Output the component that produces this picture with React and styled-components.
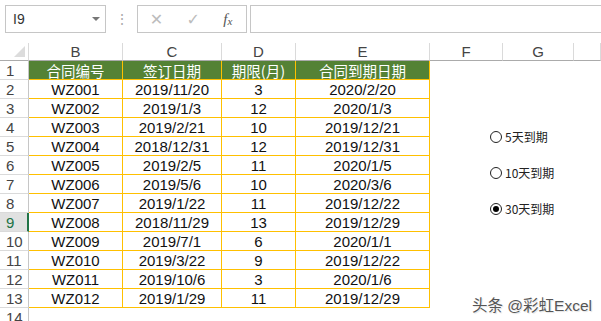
import styled, { createGlobalStyle } from 'styled-components';

const GlobalStyle = createGlobalStyle`
  body {
    margin: 0;
    background: #fff;
    overflow: hidden;
    font-family: 'Liberation Sans', 'Noto Sans CJK SC', sans-serif;
  }
`;

const rows = [
  ['WZ001', '2019/11/20', '3', '2020/2/20'],
  ['WZ002', '2019/1/3', '12', '2020/1/3'],
  ['WZ003', '2019/2/21', '10', '2019/12/21'],
  ['WZ004', '2018/12/31', '12', '2019/12/31'],
  ['WZ005', '2019/2/5', '11', '2020/1/5'],
  ['WZ006', '2019/5/6', '10', '2020/3/6'],
  ['WZ007', '2019/1/22', '11', '2019/12/22'],
  ['WZ008', '2018/11/29', '13', '2019/12/29'],
  ['WZ009', '2019/7/1', '6', '2020/1/1'],
  ['WZ010', '2019/3/22', '9', '2019/12/22'],
  ['WZ011', '2019/10/6', '3', '2020/1/6'],
  ['WZ012', '2019/1/29', '11', '2019/12/29'],
];

const headers = ['合同编号', '签订日期', '期限(月)', '合同到期日期'];
const letters = ['B', 'C', 'D', 'E', 'F', 'G', ''];
const options = ['5天到期', '10天到期', '30天到期'];

const App = () => (
  <Page>
    <GlobalStyle />
    <FormulaBar>
      <NameBox>
        I9
        <Caret />
      </NameBox>
      <Dots>⋮</Dots>
      <FuncBox>
        <FuncIcon>✕</FuncIcon>
        <FuncIcon>✓</FuncIcon>
        <Fx>
          f<sub>x</sub>
        </Fx>
      </FuncBox>
      <FormulaInput />
    </FormulaBar>

    <Sheet>
      <Corner />
      {letters.map((l, i) => (
        <ColHead key={i}>{l}</ColHead>
      ))}

      <RowHead>1</RowHead>
      {headers.map((h) => (
        <TitleCell key={h}>{h}</TitleCell>
      ))}
      <Blank />
      <Blank />
      <Blank />

      {rows.map((r, i) => (
        <Row key={r[0]} r={r} n={i + 2} />
      ))}

      <RowHead>14</RowHead>
      <Blank />
      <Blank />
      <Blank />
      <Blank />
      <Blank />
      <Blank />
      <Blank />
    </Sheet>

    <Radios>
      {options.map((o, i) => (
        <Radio key={o}>
          <Dot $checked={i === 2} />
          {o}
        </Radio>
      ))}
    </Radios>

    <Watermark>头条 @彩虹Excel</Watermark>
  </Page>
);

const Row = ({ r, n }) => (
  <>
    <RowHead $active={n === 9}>{n}</RowHead>
    {r.map((v, i) => (
      <Cell key={i}>{v}</Cell>
    ))}
    <Blank />
    <Blank />
    <Blank />
  </>
);

const Page = styled.div`
  position: relative;
  width: 601px;
  height: 321px;
  overflow: hidden;
`;

const FormulaBar = styled.div`
  display: flex;
  align-items: stretch;
  height: 28px;
  margin-top: 5px;
  padding-left: 5px;
  box-sizing: border-box;
`;

const NameBox = styled.div`
  position: relative;
  width: 101px;
  box-sizing: border-box;
  border: 1px solid #c6c6c6;
  padding-left: 7px;
  font-size: 14px;
  color: #333;
  display: flex;
  align-items: center;
`;

const Caret = styled.span`
  position: absolute;
  right: 5px;
  top: 11px;
  border-left: 4px solid transparent;
  border-right: 4px solid transparent;
  border-top: 4px solid #777;
`;

const Dots = styled.div`
  width: 31px;
  display: flex;
  align-items: center;
  justify-content: center;
  color: #aaa;
  font-size: 14px;
`;

const FuncBox = styled.div`
  width: 110px;
  box-sizing: border-box;
  border: 1px solid #c6c6c6;
  display: flex;
  align-items: center;
  justify-content: space-around;
  padding: 0 2px 0 0;
`;

const FuncIcon = styled.span`
  color: #bcbcbc;
  font-size: 16px;
  font-family: 'DejaVu Sans', sans-serif;
`;

const Fx = styled.span`
  font-family: 'Liberation Serif', serif;
  font-style: italic;
  font-size: 15px;
  color: #555;
  sub {
    font-size: 11px;
    vertical-align: -1px;
  }
`;

const FormulaInput = styled.div`
  flex: 1;
  margin-left: 3px;
  border: 1px solid #c6c6c6;
  border-right: none;
`;

const Sheet = styled.div`
  display: grid;
  grid-template-columns: 29px 94px 99px 74px 134px 73px 71px 1fr;
  grid-template-rows: 18px;
  grid-auto-rows: 19px;
  margin-top: 10px;
`;

const Corner = styled.div`
  position: relative;
  border-right: 1px solid #dadada;
  border-bottom: 1px solid #ababab;
  &::after {
    content: '';
    position: absolute;
    right: 3px;
    bottom: 3px;
    border-left: 11px solid transparent;
    border-bottom: 11px solid #dcdcdc;
  }
`;

const ColHead = styled.div`
  border-right: 1px solid #dadada;
  border-bottom: 1px solid #ababab;
  display: flex;
  align-items: center;
  justify-content: center;
  font-size: 15px;
  color: #444;
`;

const RowHead = styled.div`
  box-sizing: border-box;
  background: ${(p) => (p.$active ? '#e1e1e1' : '#fff')};
  color: ${(p) => (p.$active ? '#217346' : '#444')};
  border-right: ${(p) => (p.$active ? '2px solid #217346' : '1px solid #c6c6c6')};
  border-bottom: 1px solid #dadada;
  display: flex;
  align-items: center;
  padding-left: 6px;
  font-size: 15px;
`;

const Cell = styled.div`
  border-right: 1px solid #ffc000;
  border-bottom: 1px solid #ffc000;
  display: flex;
  align-items: center;
  justify-content: center;
  font-size: 15px;
  color: #111;
  white-space: nowrap;
`;

const TitleCell = styled(Cell)`
  background: #548235;
  color: #fff;
  font-family: 'Noto Sans CJK SC', sans-serif;
  font-size: 14.5px;
`;

const Blank = styled.div``;

const Radios = styled.div`
  position: absolute;
  left: 490px;
  top: 127px;
  display: flex;
  flex-direction: column;
  gap: 17px;
`;

const Radio = styled.label`
  display: flex;
  align-items: center;
  gap: 3px;
  height: 19px;
  font-family: 'Noto Sans CJK SC', sans-serif;
  font-size: 12px;
  color: #222;
`;

const Dot = styled.span`
  width: 12px;
  height: 12px;
  box-sizing: border-box;
  border: 1px solid #222;
  border-radius: 50%;
  display: flex;
  align-items: center;
  justify-content: center;
  &::after {
    content: '';
    display: ${(p) => (p.$checked ? 'block' : 'none')};
    width: 6px;
    height: 6px;
    border-radius: 50%;
    background: #000;
  }
`;

const Watermark = styled.div`
  position: absolute;
  right: 9px;
  bottom: 6px;
  font-family: 'Liberation Sans', 'Noto Sans CJK SC', sans-serif;
  font-size: 15.5px;
  color: #555;
  text-shadow: 0 0 2px #fff, 1px 1px 1px #ddd;
`;

export default App;
